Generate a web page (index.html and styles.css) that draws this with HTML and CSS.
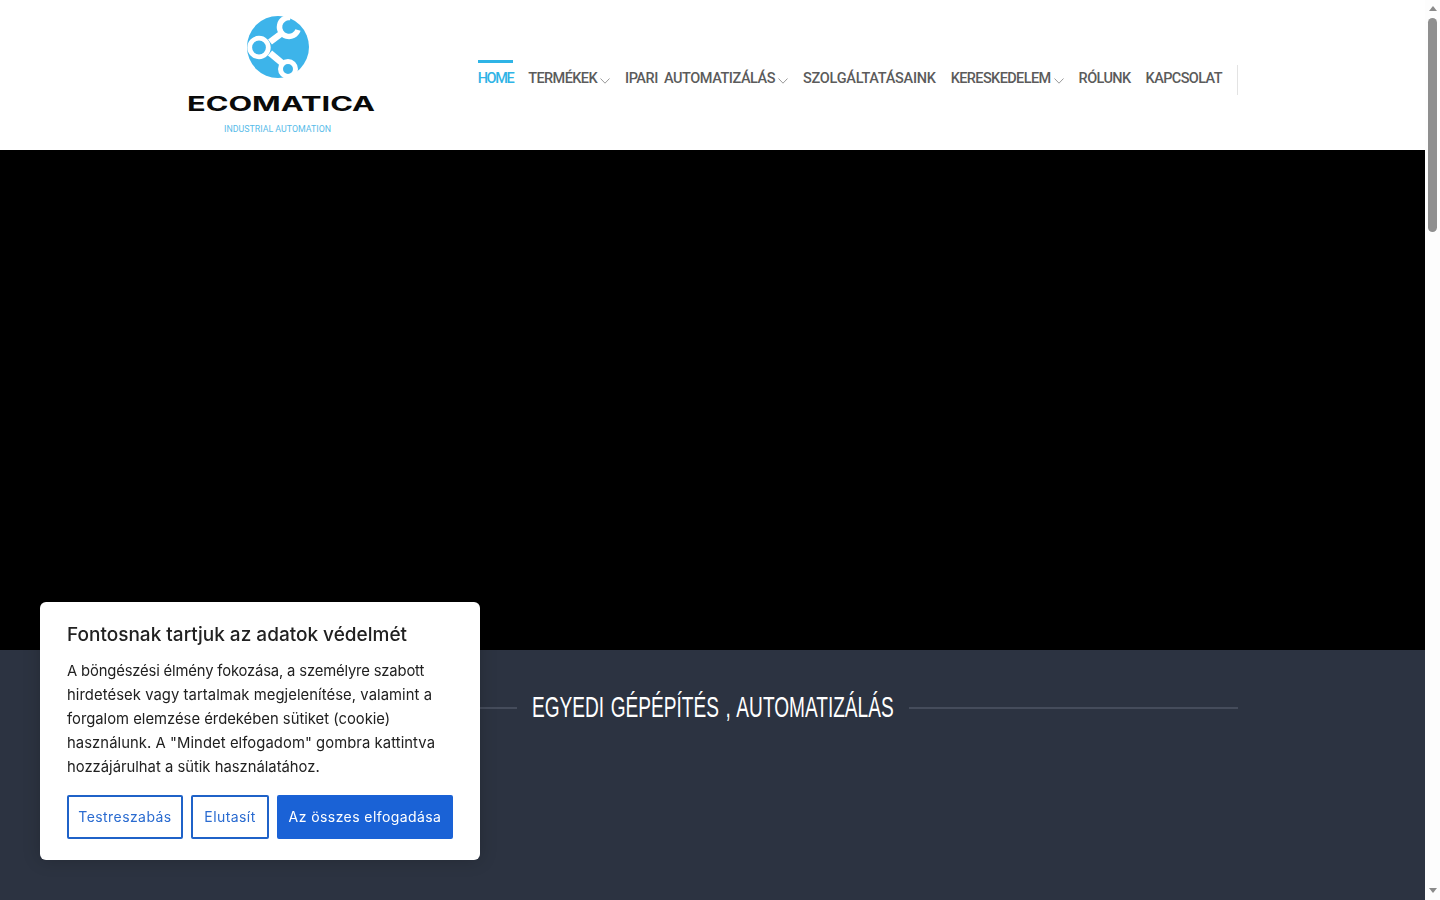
FILE: index.html
```
<!DOCTYPE html>
<html lang="hu">
<head>
<meta charset="utf-8">
<title>Ecomatica</title>
<link rel="stylesheet" href="styles.css">
</head>
<body>
<main class="page">
<header class="site-header">
  <div class="header-inner">
    <a class="logo" href="#" aria-label="Ecomatica">
      <svg class="logo-svg" viewBox="0 0 190 130" width="190" height="130">
        <circle cx="91" cy="37" r="31" fill="#3db4ea"/>
        <g fill="none" stroke="#fff">
          <circle cx="72" cy="37.5" r="9.3" stroke-width="4.8"/>
          <circle cx="101" cy="59" r="7.5" stroke-width="5"/>
          <path d="M103.5 7.6 A9.5 9.5 0 1 0 111 20" stroke-width="5.5"/>
          <path d="M83 32 L95 23" stroke-width="6.5"/>
          <path d="M83 43 L95 53" stroke-width="6.5"/>
        </g>
        <text class="logo-name" x="0" y="101" textLength="188" lengthAdjust="spacingAndGlyphs">ECOMATICA</text>
        <text class="logo-sub" x="37" y="122" textLength="107" lengthAdjust="spacingAndGlyphs">INDUSTRIAL AUTOMATION</text>
      </svg>
    </a>
    <nav class="main-nav">
      <a class="nav-item active" href="#">HOME</a>
      <a class="nav-item" href="#">TERMÉKEK<svg class="chev" viewBox="0 0 10 6" width="10" height="6"><path d="M.5.5 5 5.2 9.5.5"/></svg></a>
      <a class="nav-item nav-ipari" href="#">IPARI AUTOMATIZÁLÁS<svg class="chev" viewBox="0 0 10 6" width="10" height="6"><path d="M.5.5 5 5.2 9.5.5"/></svg></a>
      <a class="nav-item nav-wide" href="#">SZOLGÁLTATÁSAINK</a>
      <a class="nav-item" href="#">KERESKEDELEM<svg class="chev" viewBox="0 0 10 6" width="10" height="6"><path d="M.5.5 5 5.2 9.5.5"/></svg></a>
      <a class="nav-item" href="#">RÓLUNK</a>
      <a class="nav-item" href="#">KAPCSOLAT</a>
      <span class="nav-divider"></span>
    </nav>
  </div>
</header>
<section class="hero"></section>
<section class="dark-section">
  <div class="title-row">
    <span class="title-line"></span>
    <h2 class="section-title"><span class="section-title-text">EGYEDI GÉPÉPÍTÉS , AUTOMATIZÁLÁS</span></h2>
    <span class="title-line"></span>
  </div>
</section>
</main>
<div class="scrollbar">
  <span class="arrow-up"></span>
  <span class="thumb"></span>
  <span class="arrow-down"></span>
</div>
<aside class="cookie-card">
  <h3 class="cookie-title">Fontosnak tartjuk az adatok védelmét</h3>
  <p class="cookie-text"><span class="line-tight">A böngészési élmény fokozása, a személyre szabott</span><br><span class="line-wide">hirdetések vagy tartalmak megjelenítése, valamint a</span><br>forgalom elemzése érdekében sütiket (cookie)<br><span class="line-wide">használunk. A "Mindet elfogadom" gombra kattintva</span><br>hozzájárulhat a sütik használatához.</p>
  <div class="cookie-actions">
    <button class="btn btn-custom">Testreszabás</button>
    <button class="btn btn-reject">Elutasít</button>
    <button class="btn btn-accept">Az összes elfogadása</button>
  </div>
</aside>
</body>
</html>
```
FILE: styles.css
```
* { box-sizing: border-box; }
html, body { margin: 0; padding: 0; height: 100%; }
body { background: #fff; font-family: "Inter", "Liberation Sans", sans-serif; display: flex; overflow: hidden; }
.page { flex: 1; min-width: 0; height: 900px; overflow: hidden; }

.scrollbar { width: 15px; flex: none; height: 900px; background: #fdfdfd; display: flex; flex-direction: column; align-items: center; padding: 6px 0 7px; }
.arrow-up { width: 0; height: 0; border-left: 4.5px solid transparent; border-right: 4.5px solid transparent; border-bottom: 5px solid #8a8a8a; }
.arrow-down { width: 0; height: 0; margin-top: auto; border-left: 4.5px solid transparent; border-right: 4.5px solid transparent; border-top: 5px solid #8a8a8a; }
.thumb { width: 9px; height: 214px; margin-top: 7px; border-radius: 5px; background: #8f8f8f; }

.site-header { height: 150px; background: #fff; }
.header-inner { width: 1051px; margin: 0 auto; display: flex; align-items: flex-start; padding-top: 10px; }
.logo { display: block; width: 190px; height: 130px; flex: none; }
.logo-svg { display: block; }
.logo-name { font-family: "Inter", sans-serif; font-weight: 700; font-size: 19.5px; fill: #0a0a0a; }
.logo-sub { font-family: "Roboto", sans-serif; font-size: 9px; fill: #58bce9; }

.main-nav { margin-left: auto; margin-top: 50px; display: flex; align-items: flex-start; gap: 15px; }
.nav-item { display: flex; align-items: center; height: 30px; padding-top: 4px; border-top: 3px solid transparent; color: #5b5b5b; text-decoration: none; font-family: "Roboto", sans-serif; font-weight: 500; font-size: 14.5px; letter-spacing: -.6px; white-space: nowrap; }
.nav-item.active { color: #2fb4e6; border-top-color: #2fb4e6; letter-spacing: -1.4px; }
.nav-item.nav-wide { letter-spacing: -.27px; }
.nav-item.nav-ipari { letter-spacing: -.45px; word-spacing: 3px; }
.chev { margin-left: 3px; margin-top: 4px; fill: none; stroke: #9a9a9a; stroke-width: 1; }
.nav-divider { width: 1px; height: 30px; margin-top: 5px; background: #e3e3e3; }

.hero { height: 500px; background: #000; }

.dark-section { height: 250px; background: #2c3341; padding-top: 28px; }
.title-row { width: 1051px; margin: 0 auto; display: flex; align-items: center; gap: 15px; }
.title-line { flex: 1; height: 2px; background: #454c5b; }
.section-title { margin: 0; width: 362px; flex: none; color: #fff; font-family: "Liberation Sans", sans-serif; font-weight: 400; font-size: 29px; line-height: 58px; padding-bottom: 2px; white-space: nowrap; }
.section-title-text { display: inline-block; word-spacing: 2px; transform: scaleX(.658); transform-origin: left center; }

.cookie-card { position: fixed; left: 40px; top: 602px; width: 440px; height: 258px; background: #fff; border-radius: 6px; box-shadow: 0 0 18px rgba(0,0,0,.2); padding: 21px 27px 0; }
.cookie-title { margin: 0 0 12px; color: #212121; font-size: 19px; line-height: 24px; font-weight: 500; white-space: nowrap; }
.cookie-text { margin: 0 0 16px; color: #212121; font-size: 14.8px; line-height: 24px; white-space: nowrap; }
.line-tight { letter-spacing: -.16px; }
.line-wide { letter-spacing: .07px; }
.cookie-actions { display: flex; gap: 8px; }
.btn { height: 44px; border-radius: 2px; border: 2px solid #1f62c8; padding: 0 0 2px; font-family: "Inter", sans-serif; font-size: 14px; font-weight: 400; letter-spacing: .42px; background: #fff; color: #2a6bd0; }
.btn-custom { width: 116px; }
.btn-reject { width: 78px; }
.btn-accept { width: 176px; background: #1a62d6; border-color: #1a62d6; color: #fff; }
```
